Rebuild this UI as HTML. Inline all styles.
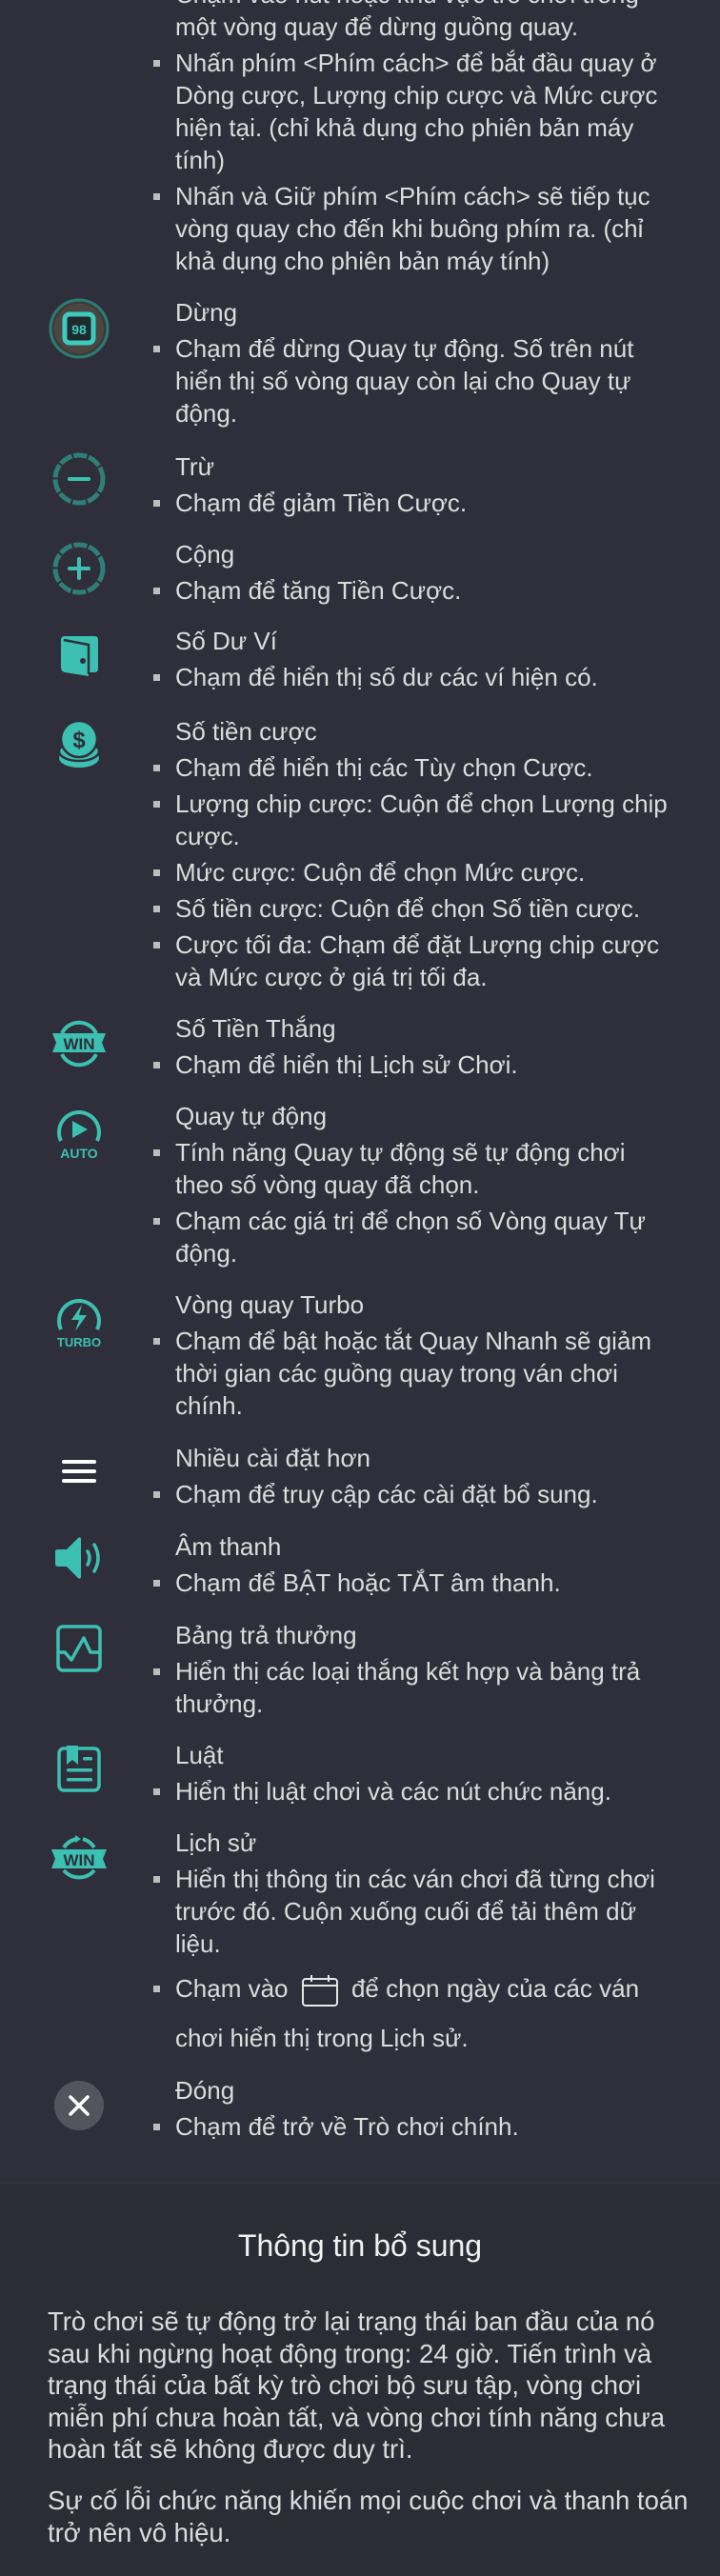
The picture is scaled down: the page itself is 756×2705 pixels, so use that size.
<!DOCTYPE html>
<html><head><meta charset="utf-8">
<style>
*{margin:0;padding:0;box-sizing:border-box}
html,body{width:756px;height:2705px;overflow:hidden}
body{background:#2f2f3b;font-family:"Liberation Sans","DejaVu Sans",sans-serif;color:#dcdcdc;font-size:26px;letter-spacing:0;position:relative}
.it{position:absolute;left:184px;width:570px;line-height:34px;white-space:nowrap}
.it .t{height:34px}
.it ul{list-style:none}
.it li{margin-top:4px;position:relative}
.it li:before{content:"";position:absolute;left:-23px;top:14px;width:7px;height:7px;background:#bdbdbd}
.it li.cal:before{top:23px}
.ic{position:absolute;left:83px;transform:translate(-50%,-50%)}
.bottom{position:absolute;left:0;top:2292px;width:756px;height:413px;background:#2c2c37;border-top:1px solid #34343f}
.bottom h2{position:absolute;top:46px;left:0;width:756px;text-align:center;font-size:32px;font-weight:normal;color:#f2f2f2;line-height:38px}
.bottom p{position:absolute;left:50px;line-height:33.5px;white-space:nowrap;font-size:27.5px}
</style></head><body>

<div class="it" style="top:-23px"><ul style="margin-top:-4px">
<li>Chạm vào nút hoặc khu vực trò chơi trong<br>một vòng quay để dừng guồng quay.</li>
<li>Nhấn phím &lt;Phím cách&gt; để bắt đầu quay ở<br>Dòng cược, Lượng chip cược và Mức cược<br>hiện tại. (chỉ khả dụng cho phiên bản máy<br>tính)</li>
<li>Nhấn và Giữ phím &lt;Phím cách&gt; sẽ tiếp tục<br>vòng quay cho đến khi buông phím ra. (chỉ<br>khả dụng cho phiên bản máy tính)</li>
</ul></div>

<svg class="ic" style="top:345px" width="64" height="64" viewBox="0 0 64 64"><circle cx="32" cy="32" r="30" fill="#3d3b38" stroke="#2a7d74" stroke-width="3"/><circle cx="32" cy="32" r="26" fill="#4a4742"/><rect x="17" y="17" width="30" height="30" rx="5" fill="#1f2a2c" stroke="#3dcbc0" stroke-width="5"/><text x="32" y="38" font-family="Liberation Sans" font-size="14" font-weight="bold" fill="#3dcbc0" text-anchor="middle">98</text></svg>
<div class="it" style="top:311px"><div class="t">Dừng</div><ul><li>Chạm để dừng Quay tự động. Số trên nút<br>hiển thị số vòng quay còn lại cho Quay tự<br>động.</li></ul></div>

<svg class="ic" style="top:503px" width="58" height="58" viewBox="0 0 58 58"><circle cx="29" cy="29" r="25" fill="none" stroke="#2f7f78" stroke-width="5" stroke-dasharray="14 2"/><rect x="17" y="27" width="24" height="4" rx="2" fill="#3cc0b2"/></svg>
<div class="it" style="top:473px"><div class="t">Trừ</div><ul><li>Chạm để giảm Tiền Cược.</li></ul></div>

<svg class="ic" style="top:597px" width="58" height="58" viewBox="0 0 58 58"><circle cx="29" cy="29" r="25" fill="none" stroke="#2f7f78" stroke-width="5" stroke-dasharray="14 2"/><rect x="17" y="27" width="24" height="4" rx="2" fill="#3cc0b2"/><rect x="27" y="17" width="4" height="24" rx="2" fill="#3cc0b2"/></svg>
<div class="it" style="top:565px"><div class="t">Cộng</div><ul><li>Chạm để tăng Tiền Cược.</li></ul></div>

<svg class="ic" style="top:688px" width="48" height="48" viewBox="0 0 48 48"><path d="M5 8 Q5 4 9 4 L40 4 Q44 4 44 8 L44 38 Q44 42 40 42 L34 42 L34 46 L9 42 Q5 41 5 37 Z" fill="#3cc0b2"/><path d="M8 8 L34 13 L34 44" fill="none" stroke="#2f2f3b" stroke-width="2.5"/><circle cx="28" cy="30" r="3" fill="#2f2f3b"/></svg>
<div class="it" style="top:656px"><div class="t">Số Dư Ví</div><ul><li>Chạm để hiển thị số dư các ví hiện có.</li></ul></div>

<svg class="ic" style="top:782px" width="46" height="52" viewBox="0 0 46 52"><ellipse cx="23" cy="40" rx="21" ry="10" fill="#3cc0b2"/><ellipse cx="23" cy="33" rx="21" ry="10" fill="#3cc0b2" stroke="#2f2f3b" stroke-width="2.5"/><circle cx="23" cy="20" r="19" fill="#3cc0b2" stroke="#2f2f3b" stroke-width="2.5"/><text x="23" y="29" font-family="Liberation Sans" font-size="24" font-weight="bold" fill="#2f2f3b" text-anchor="middle">$</text></svg>
<div class="it" style="top:751px"><div class="t">Số tiền cược</div><ul><li>Chạm để hiển thị các Tùy chọn Cược.</li><li>Lượng chip cược: Cuộn để chọn Lượng chip<br>cược.</li><li>Mức cược: Cuộn để chọn Mức cược.</li><li>Số tiền cược: Cuộn để chọn Số tiền cược.</li><li>Cược tối đa: Chạm để đặt Lượng chip cược<br>và Mức cược ở giá trị tối đa.</li></ul></div>

<svg class="ic" style="top:1095px" width="60" height="52" viewBox="0 0 60 52"><path d="M12 16 A20 20 0 0 1 48 16" fill="none" stroke="#3cc0b2" stroke-width="4"/><path d="M12 38 A20 20 0 0 0 48 38" fill="none" stroke="#3cc0b2" stroke-width="4"/><path d="M2 16 L58 16 L54 26 L58 36 L2 36 L6 26 Z" fill="#3cc0b2"/><text x="30" y="33" font-family="Liberation Sans" font-size="17" font-weight="bold" fill="#2f2f3b" text-anchor="middle">WIN</text></svg>
<div class="it" style="top:1063px"><div class="t">Số Tiền Thắng</div><ul><li>Chạm để hiển thị Lịch sử Chơi.</li></ul></div>

<svg class="ic" style="top:1188px" width="60" height="60" viewBox="0 0 60 60"><path d="M11 40 A21 21 0 1 1 49 40" fill="none" stroke="#3cc0b2" stroke-width="4"/><path d="M23 19 L39 28 L23 37 Z" fill="#3cc0b2"/><text x="30" y="58" font-family="Liberation Sans" font-size="14" font-weight="bold" fill="#3cc0b2" text-anchor="middle">AUTO</text></svg>
<div class="it" style="top:1155px"><div class="t">Quay tự động</div><ul><li>Tính năng Quay tự động sẽ tự động chơi<br>theo số vòng quay đã chọn.</li><li>Chạm các giá trị để chọn số Vòng quay Tự<br>động.</li></ul></div>

<svg class="ic" style="top:1386px" width="62" height="60" viewBox="0 0 62 60"><path d="M12 40 A21 21 0 1 1 50 40" fill="none" stroke="#3cc0b2" stroke-width="4"/><path d="M34 14 L23 30 L31 30 L27 42 L39 25 L31 25 Z" fill="#3cc0b2"/><text x="31" y="58" font-family="Liberation Sans" font-size="13" font-weight="bold" fill="#3cc0b2" text-anchor="middle">TURBO</text></svg>
<div class="it" style="top:1353px"><div class="t">Vòng quay Turbo</div><ul><li>Chạm để bật hoặc tắt Quay Nhanh sẽ giảm<br>thời gian các guồng quay trong ván chơi<br>chính.</li></ul></div>

<svg class="ic" style="top:1545px" width="40" height="30" viewBox="0 0 40 30"><rect x="2" y="3" width="36" height="4" rx="2" fill="#fff"/><rect x="2" y="13" width="36" height="4" rx="2" fill="#fff"/><rect x="2" y="23" width="36" height="4" rx="2" fill="#fff"/></svg>
<div class="it" style="top:1514px"><div class="t">Nhiều cài đặt hơn</div><ul><li>Chạm để truy cập các cài đặt bổ sung.</li></ul></div>

<svg class="ic" style="top:1636px" width="56" height="46" viewBox="0 0 56 46"><path d="M3 16 Q3 14 6 14 L15 14 L27 2 Q30 0 30 4 L30 42 Q30 46 27 44 L15 32 L6 32 Q3 32 3 29 Z" fill="#3cc0b2"/><path d="M37 16 Q41 23 37 30" fill="none" stroke="#3cc0b2" stroke-width="3.5" stroke-linecap="round"/><path d="M44 9 Q52 23 44 37" fill="none" stroke="#3cc0b2" stroke-width="3.5" stroke-linecap="round"/></svg>
<div class="it" style="top:1607px"><div class="t">Âm thanh</div><ul><li>Chạm để BẬT hoặc TẮT âm thanh.</li></ul></div>

<svg class="ic" style="top:1731px" width="50" height="52" viewBox="0 0 50 52"><rect x="3" y="3" width="44" height="46" rx="5" fill="none" stroke="#3cc0b2" stroke-width="3.5"/><path d="M3 30 L10 30 L17 38 L30 15 L37 30 L47 30" fill="none" stroke="#3cc0b2" stroke-width="3.5" stroke-linejoin="round"/></svg>
<div class="it" style="top:1700px"><div class="t">Bảng trả thưởng</div><ul><li>Hiển thị các loại thắng kết hợp và bảng trả<br>thưởng.</li></ul></div>

<svg class="ic" style="top:1857px" width="48" height="52" viewBox="0 0 48 52"><rect x="3" y="5" width="42" height="44" rx="5" fill="none" stroke="#3cc0b2" stroke-width="3.5"/><path d="M11 2 L23 2 L23 22 L17 17 L11 22 Z" fill="#3cc0b2"/><rect x="28" y="14" width="10" height="3.5" rx="1.5" fill="#3cc0b2"/><rect x="11" y="26" width="27" height="3.5" rx="1.5" fill="#3cc0b2"/><rect x="11" y="36" width="27" height="3.5" rx="1.5" fill="#3cc0b2"/></svg>
<div class="it" style="top:1826px"><div class="t">Luật</div><ul><li>Hiển thị luật chơi và các nút chức năng.</li></ul></div>

<svg class="ic" style="top:1952px" width="64" height="56" viewBox="0 0 64 56"><path d="M16 16 A21 21 0 0 1 30 7" fill="none" stroke="#3cc0b2" stroke-width="4"/><path d="M36 7 A21 21 0 0 1 48 16" fill="none" stroke="#3cc0b2" stroke-width="4"/><path d="M28 3 L34 7 L28 11 Z" fill="#3cc0b2"/><path d="M16 40 A21 21 0 0 0 48 40" fill="none" stroke="#3cc0b2" stroke-width="4"/><path d="M3 18 L61 18 L57 28 L61 38 L3 38 L7 28 Z" fill="#3cc0b2"/><text x="32" y="35" font-family="Liberation Sans" font-size="17" font-weight="bold" fill="#2f2f3b" text-anchor="middle">WIN</text></svg>
<div class="it" style="top:1918px"><div class="t">Lịch sử</div><ul><li>Hiển thị thông tin các ván chơi đã từng chơi<br>trước đó. Cuộn xuống cuối để tải thêm dữ<br>liệu.</li><li class="cal" style="line-height:52px">Chạm vào <svg width="40" height="36" viewBox="0 0 40 36" style="vertical-align:middle;margin:0 6px"><rect x="2" y="6" width="36" height="28" rx="3" fill="none" stroke="#e6e6e6" stroke-width="2"/><line x1="2" y1="13" x2="38" y2="13" stroke="#e6e6e6" stroke-width="2"/><line x1="11" y1="2" x2="11" y2="9" stroke="#e6e6e6" stroke-width="2"/><line x1="29" y1="2" x2="29" y2="9" stroke="#e6e6e6" stroke-width="2"/></svg> để chọn ngày của các ván<br>chơi hiển thị trong Lịch sử.</li></ul></div>

<svg class="ic" style="top:2211px" width="54" height="54" viewBox="0 0 54 54"><circle cx="27" cy="27" r="26" fill="#54545e"/><path d="M18 18 L36 36 M36 18 L18 36" stroke="#fff" stroke-width="3.5" stroke-linecap="round"/></svg>
<div class="it" style="top:2178px"><div class="t">Đóng</div><ul><li>Chạm để trở về Trò chơi chính.</li></ul></div>

<div class="bottom">
<h2>Thông tin bổ sung</h2>
<p style="top:128px">Trò chơi sẽ tự động trở lại trạng thái ban đầu của nó<br>sau khi ngừng hoạt động trong: 24 giờ. Tiến trình và<br>trạng thái của bất kỳ trò chơi bộ sưu tập, vòng chơi<br>miễn phí chưa hoàn tất, và vòng chơi tính năng chưa<br>hoàn tất sẽ không được duy trì.</p>
<p style="top:316px">Sự cố lỗi chức năng khiến mọi cuộc chơi và thanh toán<br>trở nên vô hiệu.</p>
</div>
</body></html>
